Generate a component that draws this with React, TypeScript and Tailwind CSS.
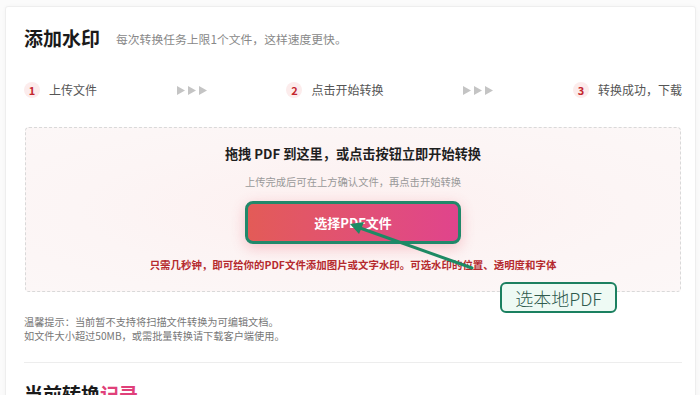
import React from 'react';

const steps = [
  { n: 1, label: '上传文件' },
  { n: 2, label: '点击开始转换' },
  { n: 3, label: '转换成功，下载' },
];

function Arrows() {
  return (
    <div className="flex items-center gap-[3px]">
      {[0, 1, 2].map((i) => (
        <svg key={i} width="8" height="9" viewBox="0 0 8 9">
          <path d="M0 0 L8 4.5 L0 9 Z" fill="#c4c4c4" />
        </svg>
      ))}
    </div>
  );
}

function Step({ n, label }: { n: number; label: string }) {
  return (
    <div className="flex items-center">
      <span className="w-[16px] h-[16px] rounded-full bg-[#fcecec] text-[#c4262e] text-[11px] font-bold flex items-center justify-center leading-none">
        {n}
      </span>
      <span className="ml-[9px] text-[12px] leading-[20px] text-[#555]">{label}</span>
    </div>
  );
}

export default function App() {
  return (
    <div className="relative w-[700px] h-[395px] overflow-hidden bg-[#fbfbfb] font-['Noto_Sans_CJK_SC','Noto_Sans',sans-serif]">
      <div className="ml-[5px] mt-[6px] w-[691px] h-[420px] bg-white border border-[#eeeeee] rounded-[3px] shadow-[0_0_4px_rgba(0,0,0,0.03)] pl-[18px] pr-[13px] pt-[17px]">
        <div className="flex items-center h-[28px]">
          <h1 className="text-[19px] leading-[28px] font-bold text-[#1a1a1a]">添加水印</h1>
          <p className="ml-[16px] text-[11.8px] text-[#888] leading-[28px] pt-[1px]">
            每次转换任务上限1个文件，这样速度更快。
          </p>
        </div>

        <div className="mt-[28px] h-[20px] flex items-center justify-between">
          {steps.map((s, i) => (
            <React.Fragment key={s.n}>
              {i > 0 && <Arrows />}
              <Step n={s.n} label={s.label} />
            </React.Fragment>
          ))}
        </div>

        <div className="mt-[27px] ml-[1px] w-[656px] h-[165px] border border-dashed border-[#d9d9d9] rounded-[4px] bg-[radial-gradient(ellipse_at_center,#fdf0f0_0%,#fcf5f5_60%,#fcf7f7_100%)] flex flex-col items-center pt-[16px]">
          <h2 className="text-[13.2px] leading-[20px] font-bold text-[#1f1f1f]">
            拖拽 PDF 到这里，或点击按钮立即开始转换
          </h2>
          <p className="mt-[10px] text-[10.3px] leading-[16px] text-[#999]">
            上传完成后可在上方确认文件，再点击开始转换
          </p>
          <button className="mt-[11px] w-[216px] h-[43px] rounded-[8px] border-[3px] border-[#21886a] bg-gradient-to-r from-[#e35b57] to-[#e0448c] text-white text-[13px] font-bold shadow-[0_4px_14px_rgba(232,80,100,0.3)]">
            选择PDF文件
          </button>
          <p className="mt-[13px] text-[10.45px] leading-[16px] font-bold text-[#b52a2e]">
            只需几秒钟，即可给你的PDF文件添加图片或文字水印。可选水印的位置、透明度和字体
          </p>
        </div>

        <div className="mt-[23px] text-[10.2px] leading-[14px] text-[#777]">
          <p>温馨提示：当前暂不支持将扫描文件转换为可编辑文档。</p>
          <p>如文件大小超过50MB，或需批量转换请下载客户端使用。</p>
        </div>

        <div className="mt-[19px] w-[658px] h-px bg-[#ededed]" />

        <h2 className="mt-[17px] text-[19px] leading-[28px] font-bold text-[#1a1a1a]">
          当前转换<span className="text-[#e0407a]">记录</span>
        </h2>
      </div>

      <svg className="absolute left-0 top-0 pointer-events-none" width="700" height="395">
        <line x1="472" y1="268" x2="360" y2="228" stroke="#1d8a64" strokeWidth="3" strokeLinecap="round" />
        <path d="M350 224 L364 222 L359 234 Z" fill="#1d8a64" />
      </svg>

      <div className="absolute left-[500px] top-[282px] w-[117px] h-[31px] rounded-[6px] border-2 border-[#1b8060] bg-[#eefaf4] flex items-center justify-center text-[18px] leading-none font-light text-[#2f5b4e]">
        选本地PDF
      </div>
    </div>
  );
}
